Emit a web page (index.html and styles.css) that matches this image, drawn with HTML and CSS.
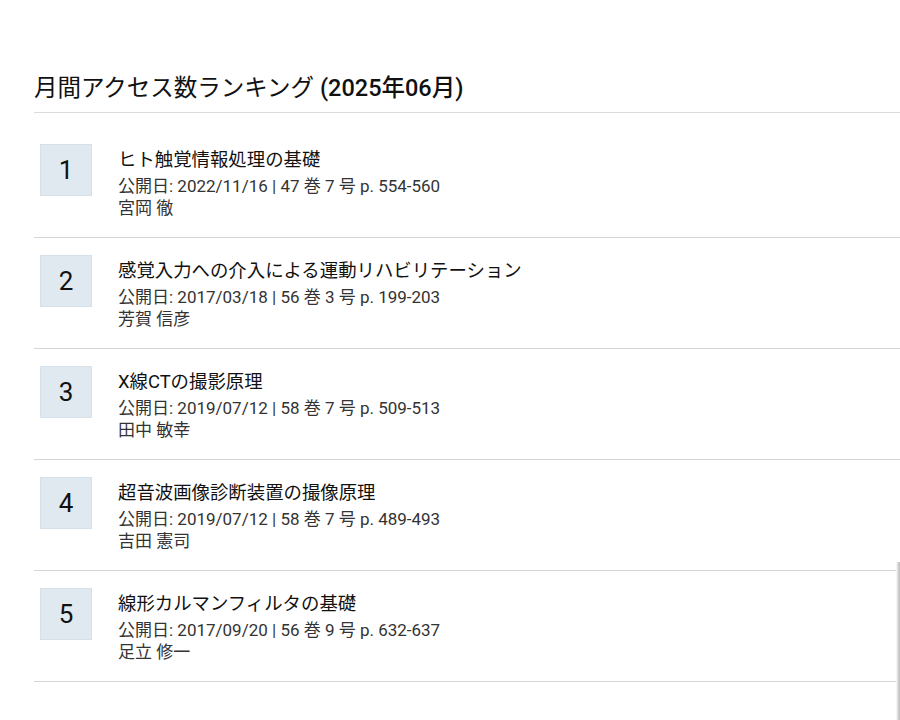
FILE: index.html
```html
<!DOCTYPE html>
<html lang="ja">
<head>
<meta charset="utf-8">
<link rel="stylesheet" href="styles.css">
</head>
<body>
<div class="panel">
  <h2 class="heading">月間アクセス数ランキング <span class="period">(2025年06月)</span></h2>
  <ul class="ranking">
    <li class="item">
      <div class="rank">1</div>
      <div class="info">
        <div class="title">ヒト触覚情報処理の基礎</div>
        <div class="meta">公開日: 2022/11/16 | 47 巻 7 号 p. 554-560</div>
        <div class="author">宮岡 徹</div>
      </div>
    </li>
    <li class="item">
      <div class="rank">2</div>
      <div class="info">
        <div class="title">感覚入力への介入による運動リハビリテーション</div>
        <div class="meta">公開日: 2017/03/18 | 56 巻 3 号 p. 199-203</div>
        <div class="author">芳賀 信彦</div>
      </div>
    </li>
    <li class="item">
      <div class="rank">3</div>
      <div class="info">
        <div class="title">X線CTの撮影原理</div>
        <div class="meta">公開日: 2019/07/12 | 58 巻 7 号 p. 509-513</div>
        <div class="author">田中 敏幸</div>
      </div>
    </li>
    <li class="item">
      <div class="rank">4</div>
      <div class="info">
        <div class="title">超音波画像診断装置の撮像原理</div>
        <div class="meta">公開日: 2019/07/12 | 58 巻 7 号 p. 489-493</div>
        <div class="author">吉田 憲司</div>
      </div>
    </li>
    <li class="item">
      <div class="rank">5</div>
      <div class="info">
        <div class="title">線形カルマンフィルタの基礎</div>
        <div class="meta">公開日: 2017/09/20 | 56 巻 9 号 p. 632-637</div>
        <div class="author">足立 修一</div>
      </div>
    </li>
  </ul>
</div>
<div class="edge-shadow"></div>
</body>
</html>
```

FILE: styles.css
```css
html, body {
  margin: 0;
  padding: 0;
  background: #ffffff;
  overflow: hidden;
}
body {
  font-family: Roboto, "Noto Sans CJK JP", sans-serif;
  color: #222;
  height: 720px;
  position: relative;
}
.panel {
  width: 900px;
  margin-left: 34px;
  padding-top: 72px;
}
.heading {
  margin: 0;
  font-size: 23.5px;
  font-weight: 400;
  line-height: 32px;
  color: #111;
  padding-bottom: 8px;
  border-bottom: 1px solid #dcdcdc;
}
.period {
  font-weight: 500;
}
.ranking {
  list-style: none;
  margin: 14px 0 0;
  padding: 0;
}
.item {
  display: flex;
  align-items: flex-start;
  padding: 17px 0 18px 6px;
  border-bottom: 1px solid #d4d4d4;
}
.rank {
  width: 52px;
  height: 52px;
  flex: none;
  background: #e0e8f0;
  box-shadow: inset 0 0 0 1px #d6e0ea;
  display: flex;
  align-items: center;
  justify-content: center;
  font-size: 26px;
  color: #111;
}
.info {
  margin-left: 26px;
}
.title {
  font-size: 18.4px;
  line-height: 31px;
  color: #111;
}
.meta, .author {
  font-size: 17px;
  line-height: 22px;
  color: #333;
}
.edge-shadow {
  position: absolute;
  left: 896px;
  top: 562px;
  width: 4px;
  height: 158px;
  background: linear-gradient(to right, #ffffff, #d0d0d0 60%, #bdbdbd);
}
```
